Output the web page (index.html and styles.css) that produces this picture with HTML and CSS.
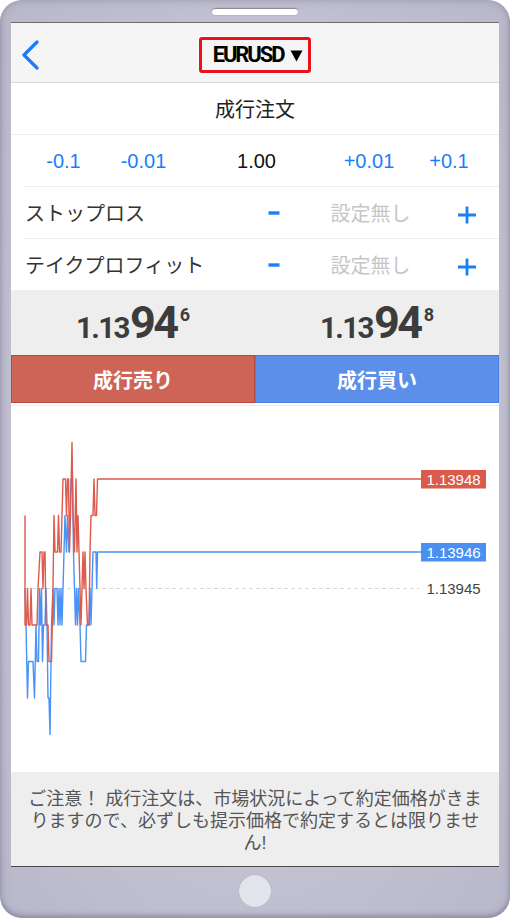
FILE: index.html
```html
<!DOCTYPE html>
<html lang="ja">
<head>
<meta charset="utf-8">
<title>成行注文</title>
<link rel="stylesheet" href="styles.css">
</head>
<body>
<div class="device">
  <div class="speaker-zone"><div class="speaker"></div></div>
  <div class="screen">
    <header class="nav">
      <div class="nav-left">
        <svg class="back" width="18" height="30" viewBox="0 0 18 30"><polyline points="15,2 2,15 15,28" fill="none" stroke="#1b7cf5" stroke-width="3.2" stroke-linecap="round" stroke-linejoin="round"/></svg>
      </div>
      <div class="symbol">EURUSD<svg class="caret" width="13" height="12" viewBox="0 0 13 12"><polygon points="0.5,0.5 12.5,0.5 6.5,11.5" fill="#000"/></svg></div>
      <div class="nav-right"></div>
    </header>

    <div class="title-row">成行注文</div>

    <div class="row lot-row">
      <span class="step">-0.1</span>
      <span class="step">-0.01</span>
      <span class="lot">1.00</span>
      <span class="step">+0.01</span>
      <span class="step">+0.1</span>
    </div>

    <div class="row setting-row">
      <span class="label">ストップロス</span>
      <span class="pm"><svg width="12" height="4" viewBox="0 0 12 4"><rect x="0.5" y="0.3" width="11" height="3.4" fill="#1a7ff9"/></svg></span>
      <span class="value">設定無し</span>
      <span class="pm plus"><svg width="20" height="20" viewBox="0 0 20 20"><path d="M10 1.5V18.5M1 10H19" stroke="#1a7ff9" stroke-width="2.8"/></svg></span>
    </div>

    <div class="row setting-row last">
      <span class="label">テイクプロフィット</span>
      <span class="pm"><svg width="12" height="4" viewBox="0 0 12 4"><rect x="0.5" y="0.3" width="11" height="3.4" fill="#1a7ff9"/></svg></span>
      <span class="value">設定無し</span>
      <span class="pm plus"><svg width="20" height="20" viewBox="0 0 20 20"><path d="M10 1.5V18.5M1 10H19" stroke="#1a7ff9" stroke-width="2.8"/></svg></span>
    </div>

    <div class="prices">
      <div class="price"><span class="p-small">1.13</span><span class="p-big">94</span><span class="p-sup">6</span></div>
      <div class="price"><span class="p-small">1.13</span><span class="p-big">94</span><span class="p-sup">8</span></div>
    </div>

    <div class="actions">
      <button class="btn sell">成行売り</button>
      <button class="btn buy">成行買い</button>
    </div>

    <div class="chart">
      <svg width="488" height="369" viewBox="11 403 488 369">
        <line x1="11" y1="405.5" x2="499" y2="405.5" stroke="#ececec" stroke-width="1"/>
        <line x1="25" y1="588.5" x2="419" y2="588.5" stroke="#d8d8d8" stroke-width="1" stroke-dasharray="4 3"/>
        <polyline fill="none" stroke="#4a92f5" stroke-width="1.4" stroke-linejoin="round"
          points="25,588.5 26,625 27.5,698 28.5,661.5 33,661.5 34.5,698 36,625 37,661.5 38.5,661.5 39.5,588.5 40.5,625 41.5,588.5 42.5,661.5 43.5,625 45,625 46,588.5 47,625 48,698 49,698 50,734.5 51.5,625 53,588.5 54,625 55,588.5 57,588.5 58,625 59,588.5 60,625 61,588.5 62,625 63,588.5 64,552 65,515.5 66.5,552 67.5,515.5 69,552 70,515.5 71,479 72.5,479 73.5,552 74.5,588.5 75.5,625 76.5,588.5 77.5,625 78.5,588.5 80,625 81,661.5 85.5,661.5 86.5,625 89,625 90,588.5 91,625 92,588.5 93,552 96,552 96.7,588.5 97.5,552 421,552"/>
        <polyline fill="none" stroke="#dd5a4c" stroke-width="1.4" stroke-linejoin="round"
          points="25,515.5 25,625 26.5,625 27.5,588.5 28.5,625 30,625 31,588.5 32,625 37,625 38,588.5 40,552 42,552 43,588.5 44,552 45,552 46,625 48,625 49,661.5 51.5,661.5 53,588.5 54,515.5 55,552 57.5,552 58.5,515.5 59.5,552 61,552 62,515.5 63,479 65.5,479 66.5,515.5 67.5,479 68.5,479 69.5,552 70.5,515.5 72,442.5 73,515.5 74.5,552 76,479 77,552 78,515.5 79,552 80,588.5 81,625 82,588.5 83,552 84,588.5 85,552 86,588.5 87.5,625 89,625 90,552 91,515.5 93,515.5 94,479 95,515.5 96.5,515.5 97.5,479 421,479"/>
        <rect x="421" y="470" width="65" height="18.5" fill="#da5a4b"/>
        <text class="tag" x="453.5" y="484.5" text-anchor="middle">1.13948</text>
        <rect x="421" y="543" width="65" height="18.5" fill="#4a90f2"/>
        <text class="tag" x="453.5" y="557.5" text-anchor="middle">1.13946</text>
        <text class="tag-plain" x="453.5" y="594" text-anchor="middle">1.13945</text>
      </svg>
    </div>

    <div class="notice">
      <p class="notice-line">ご注意！ 成行注文は、市場状況によって約定価格がきま</p>
      <p class="notice-line">りますので、必ずしも提示価格で約定するとは限りませ</p>
      <p class="notice-line">ん!</p>
    </div>
  </div>
  <div class="home-zone"><div class="home"></div></div>
</div>
</body>
</html>
```

FILE: styles.css
```css
* { box-sizing: border-box; margin: 0; padding: 0; }
html, body { width: 510px; height: 918px; background: #fff; overflow: hidden; }
body { font-family: "Liberation Sans", "Noto Sans CJK JP", sans-serif; }

.device {
  width: 510px;
  height: 918px;
  border-radius: 22px;
  background: radial-gradient(ellipse at 50% 50%, #cdccda 0%, #c4c3d3 55%, #b9b8ca 100%);
  box-shadow: inset 0 0 8px rgba(110, 108, 140, 0.45), inset 0 -3px 4px rgba(100, 98, 130, 0.35);
  display: flex;
  flex-direction: column;
  align-items: center;
}

.speaker-zone { height: 22px; padding-top: 8px; }
.speaker {
  width: 86px;
  height: 7px;
  background: #fff;
  border-radius: 4px;
  border-top: 1px solid #8c8c98;
  box-shadow: 0 0 0 0.5px #a8a8b6;
}

.screen {
  width: 488px;
  height: 845px;
  background: #fff;
  border-top: 1px solid #6c6c6c;
  border-bottom: 1px solid #4a4a4a;
  display: flex;
  flex-direction: column;
}

.home-zone {
  flex: 1;
  display: flex;
  align-items: center;
  justify-content: center;
  padding-bottom: 3px;
}
.home {
  width: 32px;
  height: 32px;
  border-radius: 50%;
  background: #e3e3eb;
  box-shadow: 0 0 1px rgba(120, 120, 140, 0.5);
}

/* nav */
.nav {
  height: 60px;
  background: #f5f5f5;
  border-bottom: 1px solid #d9d9d9;
  display: grid;
  grid-template-columns: 1fr auto 1fr;
  align-items: center;
  padding-top: 4px;
}
.nav-left { padding-left: 11px; display: flex; align-items: center; }
.back { display: block; }
.symbol {
  height: 36px;
  border: 3px solid #e8121c;
  border-radius: 3px;
  box-shadow: 0 0 0 1px #fff;
  padding: 0 5px 0 11px;
  display: flex;
  align-items: center;
  font-family: Roboto, "Liberation Sans", sans-serif;
  font-weight: 700;
  font-size: 22px;
  letter-spacing: -2.1px;
  color: #000;
}
.caret { margin-left: 7px; margin-top: 3px; }

/* title */
.title-row {
  height: 52px;
  border-bottom: 1px solid #ececec;
  display: flex;
  align-items: center;
  justify-content: center;
  font-family: "Noto Sans CJK JP", sans-serif;
  font-size: 20px;
  color: #222;
}

.row {
  margin-left: 13px;
  height: 52px;
  border-bottom: 1px solid #ececec;
  display: grid;
  align-items: center;
}
.row.last { height: 51px; border-bottom: none; }

.lot-row {
  grid-template-columns: 79px 81px 1fr 80px 80px;
  padding-right: 10px;
  font-size: 20px;
  text-align: center;
  padding-top: 2px;
}
.step { color: #1a7ff9; }
.lot { color: #111; }

.setting-row {
  grid-template-columns: 1fr 40px 153px 40px;
  padding: 0 12px 0 1px;
  font-family: "Noto Sans CJK JP", sans-serif;
  font-size: 20px;
}
.label { color: #333; }
.pm { display: flex; justify-content: center; align-items: center; }
.pm svg { display: block; }
.plus { padding-top: 4px; }
.value { color: #c6c6c6; text-align: center; }

/* prices */
.prices {
  height: 65px;
  background: #eeeeee;
  display: grid;
  grid-template-columns: 1fr 1fr;
  padding-top: 10px;
}
.price {
  display: flex;
  justify-content: center;
  align-items: baseline;
  font-family: Roboto, "Liberation Sans", sans-serif;
  font-weight: 700;
  color: #3c3c3c;
  line-height: 46px;
  height: 46px;
}
.p-small { font-size: 29.5px; letter-spacing: -1.6px; }
.p-big { font-size: 45px; letter-spacing: -2.4px; margin-left: 1px; }
.p-sup { font-size: 18px; position: relative; top: -17px; margin-left: 3px; }

/* actions */
.actions {
  height: 48px;
  display: grid;
  grid-template-columns: 244px 244px;
}
.btn {
  border: 1px solid;
  font-family: "Noto Sans CJK JP", sans-serif;
  font-weight: 700;
  font-size: 20px;
  color: #fff;
  display: flex;
  align-items: center;
  justify-content: center;
}
.sell { background: #cd6455; border-color: #b8493c; }
.buy { background: #5b8fea; border-color: #4a80e4; }

/* chart */
.chart { flex: 1; background: #fff; overflow: hidden; }
.chart svg { display: block; }
.tag { font-family: "Liberation Sans", sans-serif; font-size: 15px; fill: #fff; }
.tag-plain { font-family: "Liberation Sans", sans-serif; font-size: 15px; fill: #444; }

/* notice */
.notice {
  height: 94px;
  background: #eeeeee;
  padding-top: 16px;
  display: flex;
  flex-direction: column;
  align-items: center;
  font-family: "Liberation Sans", "Noto Sans CJK JP", sans-serif;
  font-size: 18px;
  color: #555;
}
.notice-line {
  height: 22px;
  line-height: 22px;
  white-space: nowrap;
}
```
